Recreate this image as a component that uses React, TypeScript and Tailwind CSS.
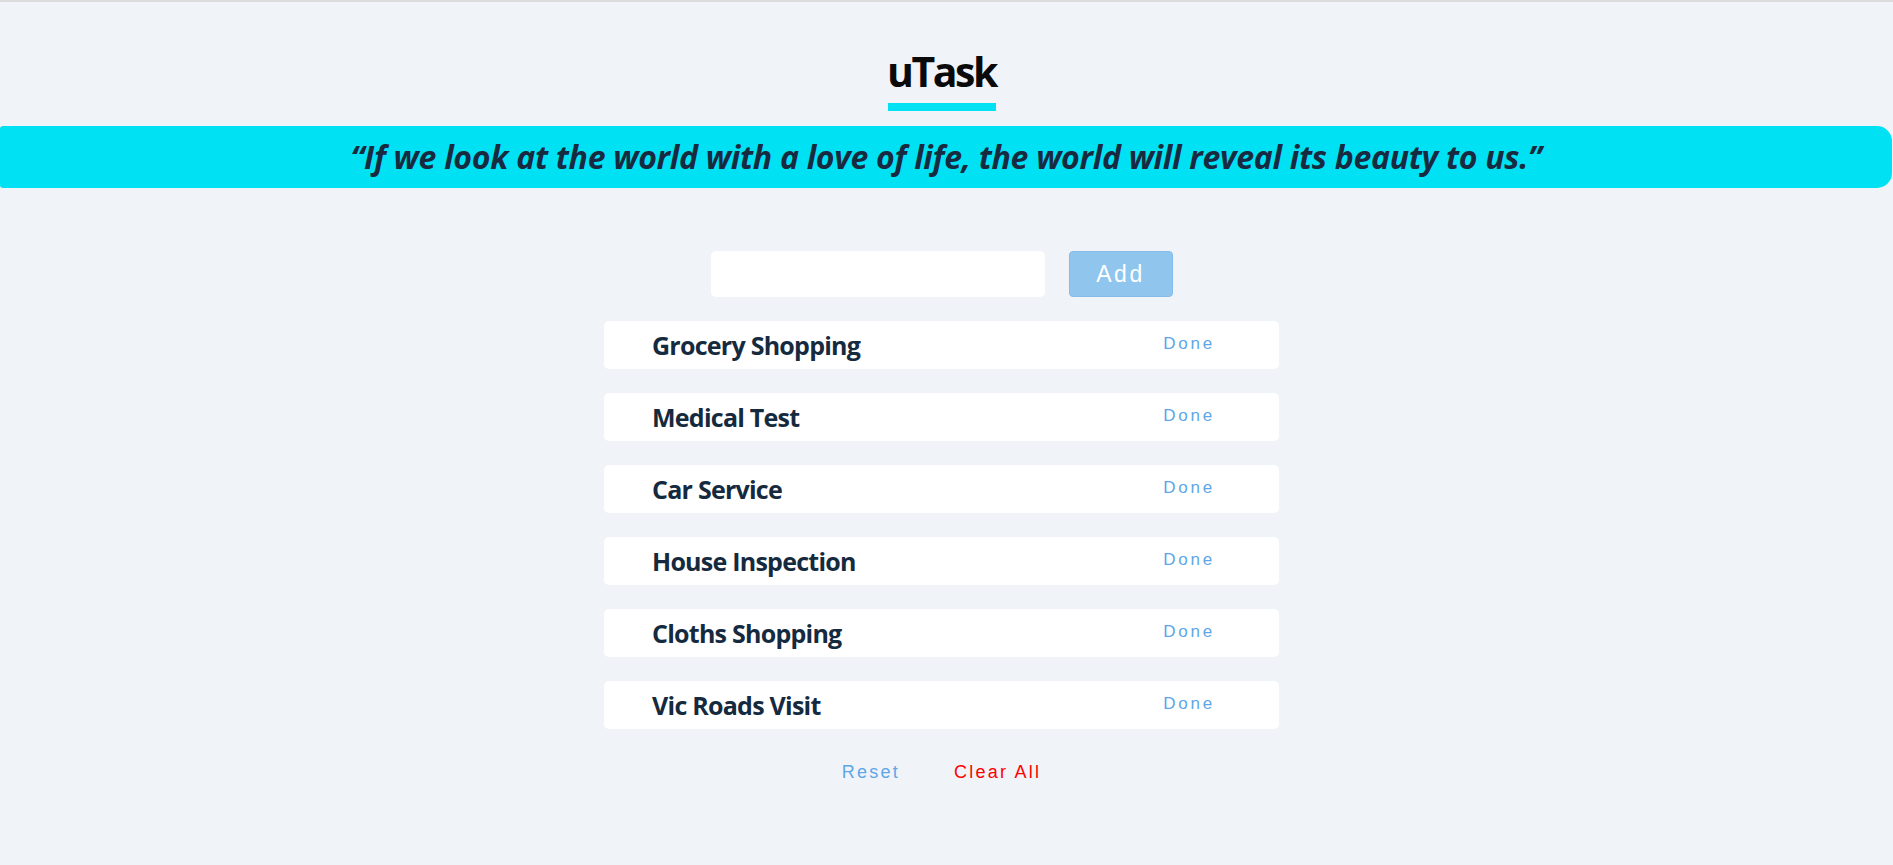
import React from "react";

const tasks = [
  "Grocery Shopping",
  "Medical Test",
  "Car Service",
  "House Inspection",
  "Cloths Shopping",
  "Vic Roads Visit",
];

export default function App() {
  return (
    <div
      className="min-h-screen bg-[#f0f4f8] border-t-2 border-[#dcdcdc]"
      style={{ fontFamily: '"Open Sans", "Noto Sans", sans-serif' }}
    >
      <div className="pr-[10px] flex flex-col items-center">
        <h1 className="mt-[49px] text-[41px] leading-none font-bold text-[#0a0a0a] tracking-[-2.5px]">
          uTask
        </h1>
        <div className="mt-[11px] w-[108px] h-[8px] bg-[#00e2f3]" />
      </div>

      <div className="mt-[15px] mr-px h-[62px] rounded-l-[3px] rounded-r-[15px] bg-[#00e2f3] flex items-center justify-center">
        <p className="text-[32px] leading-none font-bold italic text-[#172a3f] tracking-[-0.28px]">
          “If we look at the world with a love of life, the world will reveal its beauty to us.”
        </p>
      </div>

      <div className="pr-[10px] flex flex-col items-center">
        <div className="mt-[63px] flex gap-6">
          <input
            type="text"
            className="w-[334px] h-[46px] rounded-[5px] bg-white outline-none px-3"
          />
          <button
            className="w-[104px] h-[46px] rounded-[4px] bg-[#90c5ee] border border-[#85bdea] text-white text-[23px] tracking-[2.5px]"
            style={{ fontFamily: '"Liberation Sans", Arial, sans-serif' }}
          >
            Add
          </button>
        </div>

        <div className="mt-6 flex flex-col gap-6">
          {tasks.map((t) => (
            <div
              key={t}
              className="w-[675px] h-[48px] bg-white rounded-[5px] flex items-center justify-between pl-[48px] pr-[64px]"
            >
              <span className="text-[25px] leading-none font-bold text-[#152a3e] tracking-[-0.75px]">
                {t}
              </span>
              <span
                className="text-[17px] leading-none text-[#5ea6e8] tracking-[2.8px] mb-[3px]"
                style={{ fontFamily: '"Liberation Sans", Arial, sans-serif' }}
              >
                Done
              </span>
            </div>
          ))}
        </div>

        <div
          className="mt-[34px] flex gap-[54px] text-[18px] leading-none tracking-[2.25px]"
          style={{ fontFamily: '"Liberation Sans", Arial, sans-serif' }}
        >
          <span className="text-[#5ea6e8]">Reset</span>
          <span className="text-[#ff0000]">Clear All</span>
        </div>
      </div>
    </div>
  );
}
